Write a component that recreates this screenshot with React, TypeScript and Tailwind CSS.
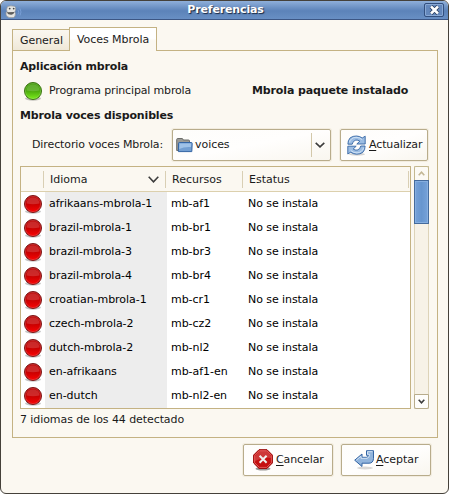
import React from 'react';

const voices = [
  ['afrikaans-mbrola-1', 'mb-af1'],
  ['brazil-mbrola-1', 'mb-br1'],
  ['brazil-mbrola-3', 'mb-br3'],
  ['brazil-mbrola-4', 'mb-br4'],
  ['croatian-mbrola-1', 'mb-cr1'],
  ['czech-mbrola-2', 'mb-cz2'],
  ['dutch-mbrola-2', 'mb-nl2'],
  ['en-afrikaans', 'mb-af1-en'],
  ['en-dutch', 'mb-nl2-en'],
];

function Led({ color }: { color: 'red' | 'green' }) {
  const red = color === 'red';
  const id = `led-${color}`;
  return (
    <svg width="20" height="20" viewBox="0 0 20 20" className="block shrink-0">
      <defs>
        <linearGradient id={id} x1="0" y1="0" x2="0" y2="1">
          <stop offset="0" stopColor={red ? '#b80000' : '#3f9a08'} />
          <stop offset="0.5" stopColor={red ? '#c80000' : '#4caa0c'} />
          <stop offset="1" stopColor={red ? '#fa0505' : '#7df01c'} />
        </linearGradient>
      </defs>
      <ellipse cx="10" cy="17.500" rx="8" ry="2.2" fill="#000" opacity="0.22" />
      <circle cx="10" cy="10" r="8.500" fill={`url(#${id})`} stroke={red ? '#7c1818' : '#3c7412'} strokeWidth="1" />
      <circle cx="10" cy="10" r="7.600" fill="none" stroke="#fff" strokeOpacity="0.2" strokeWidth="0.8" />
      <path d="M3.500 9.500a6.500 6.300 0 0 1 13 0q-6.500 1.500-13 0Z" fill="#fff" opacity="0.16" />
    </svg>
  );
}

function Chevron({ w, h, className = '', up = false }: { w: number; h: number; className?: string; up?: boolean }) {
  return (
    <svg width={w} height={h} viewBox={`0 0 ${w} ${h}`} className={`block shrink-0 ${className}`}>
      <path
        d={up ? `M.7 ${h - 0.8}L${w / 2} 1.200L${w - 0.7} ${h - 0.8}` : `M.7 .8L${w / 2} ${h - 1.2}L${w - 0.7} .8`}
        fill="none"
        stroke="currentColor"
        strokeWidth="1.600"
      />
    </svg>
  );
}

function RobotIcon() {
  return (
    <svg width="17" height="14" viewBox="0 0 17 14" className="block shrink-0">
      <path d="M1.500 4.500L2.500 1.500Q5.500 .3 9.500 1.300Q11 2 10.700 5L9.800 7L10.500 8.500Q10.500 12 8.500 12.500Q4 13.200 2 11.500Q.7 9.500 1 7.500L2 6.500Z" fill="#e6e6e2" stroke="#8f9499" strokeWidth=".7" />
      <circle cx="4.700" cy="3.600" r=".9" fill="#444" />
      <circle cx="8.700" cy="3.600" r=".9" fill="#444" />
      <path d="M1.500 7.300Q5 7 9.500 7Q8.500 10 6 9.800Q3 9.800 1.500 7.300Z" fill="#5d5d5b" />
      <path d="M13 5q1.500 2.200 0 4.500M15 3.500q2 3.500 0 7" fill="none" stroke="#7fa5da" strokeWidth=".8" />
    </svg>
  );
}

function FolderIcon() {
  return (
    <svg width="17" height="16" viewBox="0 0 17 16" className="block shrink-0">
      <path d="M.7 13.500V2.500Q.7 1.500 1.700 1.500H6Q7 1.500 7.300 3H12.500Q13.500 3 13.500 4V13.500Z" fill="#9b9b97" stroke="#6d6e6a" />
      <path d="M3.300 5.500H15.300Q16.300 5.500 16.200 6.500L15.800 14.600H2.400L2.500 6.300Q2.600 5.500 3.300 5.500Z" fill="#739fd2" stroke="#3465a4" />
      <path d="M3.500 6.500H15.200L15 10Q8 9.500 3.200 12Z" fill="#9fc2e8" />
    </svg>
  );
}

function RefreshIcon() {
  const arrow = 'M.9 9.200Q.8 5.300 3.200 2.800Q6 .9 9.500 1Q13 1.200 15.200 3L18.200 1.200V9H9.800L12.800 6.200Q11 4.800 8.800 5.100Q5.800 5.700 5.200 9.200Z';
  return (
    <svg width="20" height="21" viewBox="0 0 20 21" className="block shrink-0">
      <ellipse cx="10" cy="19.200" rx="8" ry="1.500" fill="#000" opacity=".16" />
      <g fill="#9cbde3" stroke="#3465a4" strokeWidth=".9" strokeLinejoin="round">
        <path d={arrow} />
        <path d={arrow} transform="rotate(180 9.500 10.100)" />
      </g>
      <path d="M2.300 7.500Q4 2.500 9 2.300Q12.500 2.300 15.200 4.700M16.700 12.700Q15 17.700 10 17.900Q6.500 17.900 3.800 15.500" fill="none" stroke="#d5e5f6" strokeWidth=".9" />
    </svg>
  );
}

function StopIcon() {
  return (
    <svg width="20" height="22" viewBox="0 0 20 22" className="block shrink-0">
      <ellipse cx="10" cy="19.800" rx="7.500" ry="1.800" fill="#000" opacity=".4" />
      <path d="M6 .7H14L19.400 6.100V14L14 19.400H6L.6 14V6.100Z" fill="#c51010" stroke="#9a0808" />
      <path d="M6.400 1.700H13.600L18.400 6.500V13.600L13.600 18.400H6.400L1.600 13.600V6.500Z" fill="none" stroke="#e86a6a" strokeWidth=".8" />
      <path d="M2 7L6.500 2.100H13.500L18 7V9Q10 8 2 12Z" fill="#fff" opacity=".17" />
      <path d="M6.600 6.700L13.600 13.700M13.600 6.700L6.600 13.700" stroke="#efefed" strokeWidth="2" />
    </svg>
  );
}

function ReturnIcon() {
  return (
    <svg width="21" height="20" viewBox="0 0 21 20" className="block shrink-0">
      <ellipse cx="11" cy="18" rx="8" ry="1.500" fill="#000" opacity=".15" />
      <path d="M.7 10.200L8 4V7.300H12.500Q14 7.300 14.500 5.300H12.500V.7H19.500V8.500Q19.200 13.200 15 13.200H8V16.500Z" fill="#91b4dc" stroke="#3465a4" strokeLinejoin="round" />
      <path d="M2.300 10.200L7 6.200V8.300H13Q15.300 8 15.700 4.300H13.500V1.700H18.500" fill="none" stroke="#d9e7f5" strokeWidth=".9" />
    </svg>
  );
}

const button =
  'flex h-8 shrink-0 items-center rounded-[2px] border border-[#b8ac8b] bg-linear-to-br from-[#fefdfb] via-[#fffefd] to-[#f9f6ef] shadow-[0_0_0_1px_#f2ecdf]';

function Accel({ children }: { children: string }) {
  return (
    <span>
      <span className="underline decoration-1 underline-offset-2">{children[0]}</span>
      {children.slice(1)}
    </span>
  );
}

export default function App() {
  return (
    <div className="h-[494px] w-[449px] overflow-hidden bg-white font-['DejaVu_Sans',sans-serif] text-[11px] leading-[14px] whitespace-nowrap text-[#1a1a1a]">
      <div className="flex h-[494px] w-[449px] flex-col overflow-hidden rounded-[6px] border border-[#45413a] bg-[#fbf8f1]">
        <header className="flex h-[19px] shrink-0 items-center border-b border-[#3c5684] bg-linear-to-b from-[#8fafda] via-[#5c83b9] via-55% to-[#688fc4] pr-[4px] pl-[4px]">
          <div className="flex h-full w-[20px] shrink-0 items-end"><RobotIcon /></div>
          <h1 className="grow pl-[2px] text-center font-bold tracking-[-0.15px] text-white [text-shadow:1px_1px_1px_#18263f]">Preferencias</h1>
          <button className="flex h-[14px] w-[20px] shrink-0 items-center justify-center rounded-[2px] border border-[#33507f] bg-[#6488bc] shadow-[inset_0_0_0_1px_#88a8d4]">
            <svg width="11" height="10" viewBox="0 0 11 10">
              <path d="M2 1.500L9 8.500M9 1.500L2 8.500" stroke="#263a5b" strokeWidth="4" />
              <path d="M2 1.500L9 8.500M9 1.500L2 8.500" stroke="#fff" strokeWidth="2.500" />
            </svg>
          </button>
        </header>

        <main className="flex grow flex-col pt-[7px] pr-[11px] pl-[11px]">
          <div className="flex h-[23px] shrink-0 items-end">
            <div className="flex h-[21px] w-[57px] items-center justify-center border-t border-l border-[#c4b283] bg-linear-to-b from-[#faf7f0] via-[#f6f1e6] via-45% to-[#efe8d8] pt-px pl-px tracking-[-0.05px]">General</div>
            <div className="z-10 -mb-px flex h-[24px] w-[88px] justify-center border-x border-t border-[#c4b283] bg-linear-to-b from-white via-white via-45% to-[#fbf8f1] to-55% pt-[5px] tracking-[-0.04px]">Voces Mbrola</div>
          </div>
          <section className="flex h-[388px] w-[426px] shrink-0 flex-col border border-[#c4b283] px-[7px]">
            <h2 className="mt-[9px] font-bold tracking-[-0.17px]">Aplicación mbrola</h2>
            <div className="mt-[7px] flex h-[20px] items-center pl-[3px]">
              <Led color="green" />
              <span className="ml-[6px] w-[203px] tracking-[-0.16px]">Programa principal mbrola</span>
              <b className="tracking-[-0.13px]">Mbrola paquete instalado</b>
            </div>
            <h2 className="mt-[8px] font-bold tracking-[-0.15px]">Mbrola voces disponibles</h2>
            <div className="mt-[6px] flex h-8 items-center">
              <span className="w-[152px] shrink-0 pl-[12px] tracking-[-0.11px]">Directorio voces Mbrola:</span>
              <div className={`${button} w-[159px] pl-[3px]`}>
                <FolderIcon />
                <span className="ml-[2px] grow tracking-[-0.05px]">voices</span>
                <div className="flex h-[24px] w-[19px] items-center justify-start border-l border-[#d3c8aa] pl-[3px]">
                  <Chevron w={10} h={6} className="text-[#3c3c3c]" />
                </div>
              </div>
              <button className={`${button} ml-[9px] w-[88px] pl-[6px]`}>
                <RefreshIcon />
                <span className="ml-[2px] tracking-[-0.12px]"><Accel>Actualizar</Accel></span>
              </button>
            </div>

            <div className="mt-[5px] flex h-[243px] justify-between pr-px">
              <div className="w-[391px] shrink-0 border border-[#c4b283] bg-white">
                <div className="flex h-[25px] items-center border-b border-[#dcd0ad] bg-[#fbf8f1] pt-px">
                  <div className="h-[17px] w-[23px] border-r border-[#d9cfb4]" />
                  <div className="flex h-[17px] w-[122px] items-center justify-between border-r border-[#d9cfb4] pr-[6px] pl-[6px]">
                    Idioma<Chevron w={11} h={7} className="text-[#3c3c3c]" />
                  </div>
                  <div className="flex h-[17px] w-[77px] items-center border-r border-[#d9cfb4] pl-[6px]">Recursos</div>
                  <div className="flex h-[17px] w-[166px] items-center border-r border-[#d9cfb4] pl-[6px]">Estatus</div>
                </div>
                {voices.map(([name, resource]) => (
                  <div key={name} className="flex h-[24px] items-center tracking-[-0.04px] text-black">
                    <div className="w-[24px] pl-[2px]"><Led color="red" /></div>
                    <div className="flex h-full w-[122px] items-center bg-[#ededed] pl-[4px]">{name}</div>
                    <div className="w-[77px] pl-[4px]">{resource}</div>
                    <div className="pl-[4px] tracking-[-0.07px]">No se instala</div>
                  </div>
                ))}
              </div>
              <div className="flex w-[15px] flex-col border border-[#ddd3b8] bg-[#f7f2e7]">
                <div className="-mx-px -mt-px flex h-[14px] shrink-0 items-center justify-center rounded-t-[2px] border border-b-0 border-[#c4b88f] bg-[#fcfaf5] text-[#c3b795]"><Chevron w={7} h={5} up /></div>
                <div className="-mx-px h-[44px] shrink-0 border border-[#456b9c] bg-linear-to-r from-[#76a2d9] via-[#6796cf] to-[#76a2d9] shadow-[inset_0_0_0_1px_#86afe0]" />
                <div className="grow" />
                <div className="-mx-px -mb-px flex h-[15px] shrink-0 items-center justify-center rounded-b-[2px] border border-[#b8ac8b] bg-[#fefdfb] text-[#3c3c3c]"><Chevron w={7} h={5} /></div>
              </div>
            </div>
            <p className="mt-[4px] tracking-[-0.08px]">7 idiomas de los 44 detectado</p>
          </section>

          <footer className="mt-[6px] flex justify-end gap-[8px] pr-[6px]">
            <button className={`${button} w-[90px] pl-[9px]`}>
              <StopIcon />
              <span className="ml-[3px] tracking-[-0.1px]"><Accel>Cancelar</Accel></span>
            </button>
            <button className={`${button} w-[90px] pl-[12px]`}>
              <ReturnIcon />
              <span className="ml-px tracking-[-0.05px]"><Accel>Aceptar</Accel></span>
            </button>
          </footer>
        </main>
      </div>
    </div>
  );
}
